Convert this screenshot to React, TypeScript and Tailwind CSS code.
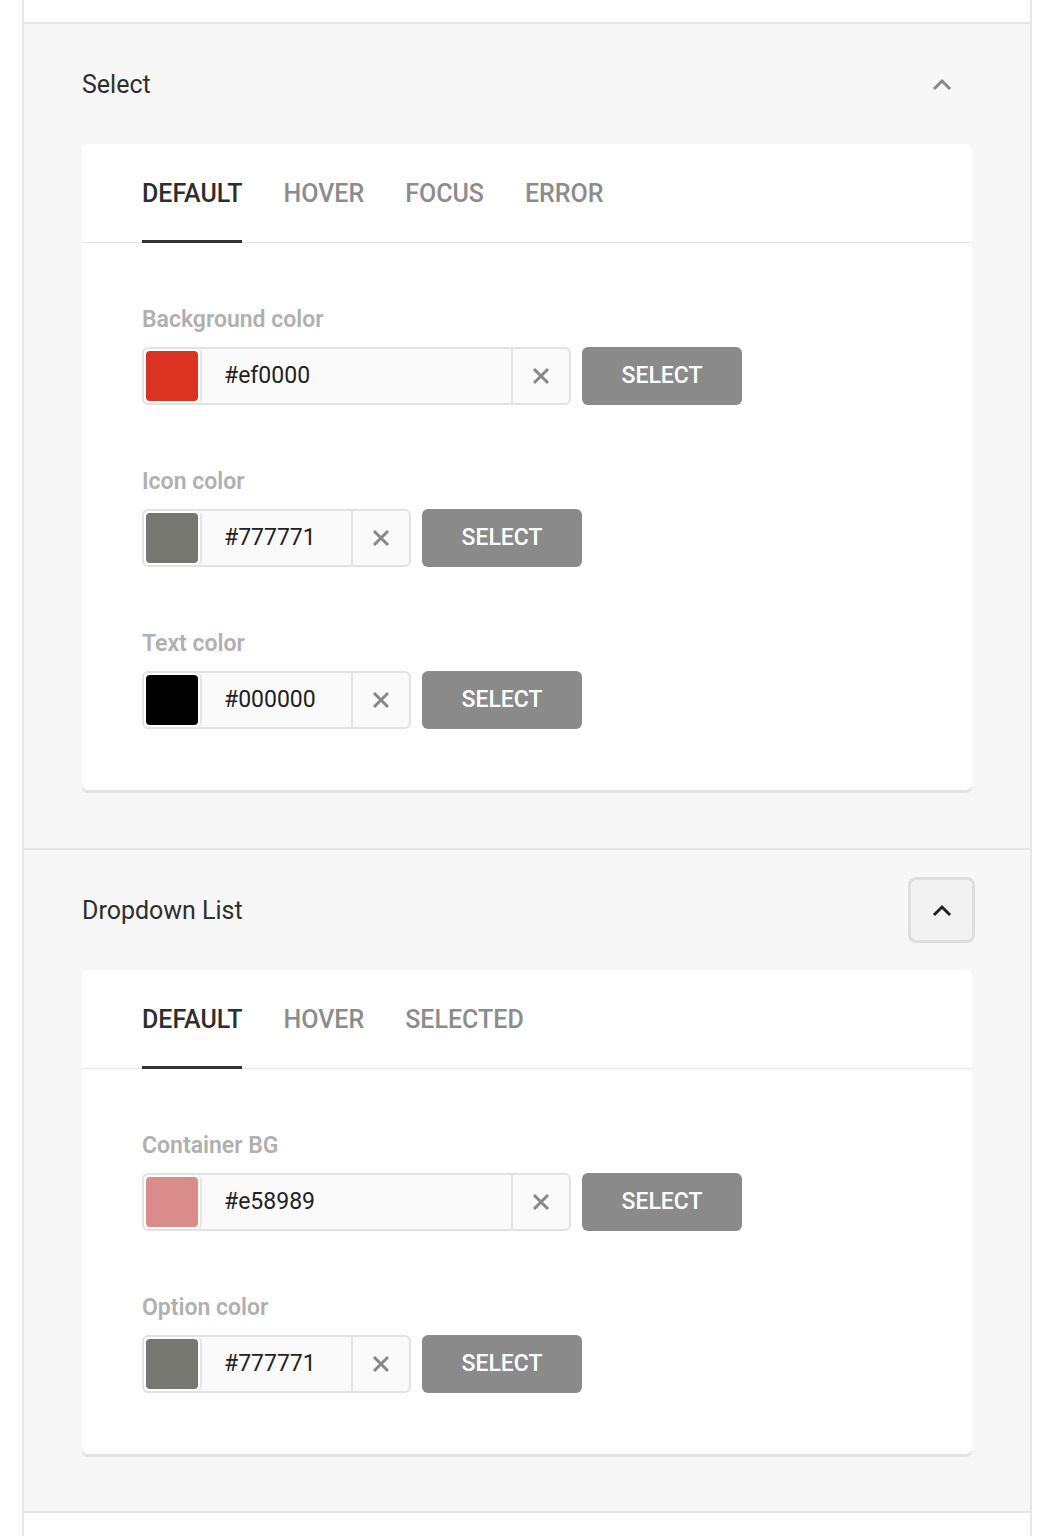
import React from "react";

type Field = { label: string; color: string; value: string; wide: boolean };

function Chevron({ dark }: { dark: boolean }) {
  return (
    <svg width="20" height="14" viewBox="0 0 20 14" fill="none">
      <path
        d="M3 11 L10 4 L17 11"
        stroke={dark ? "#222222" : "#888888"}
        strokeWidth="3"
        strokeLinecap="square"
        strokeLinejoin="miter"
      />
    </svg>
  );
}

function XIcon() {
  return (
    <svg width="20" height="20" viewBox="0 0 20 20" fill="none">
      <path d="M3 3 L17 17 M17 3 L3 17" stroke="#888888" strokeWidth="3" />
    </svg>
  );
}

function ColorRow({ f }: { f: Field }) {
  return (
    <div className="flex flex-col">
      <div className="text-[23px] leading-[26px] font-semibold text-[#b0b0b0]">{f.label}</div>
      <div className="mt-[14px] flex items-center gap-[11px] h-[58px]">
        <div
          className={`flex h-[58px] ${f.wide ? "w-[429px]" : "w-[269px]"} rounded-[6px] border-2 border-[#e2e2e2] bg-[#fafafa] overflow-hidden`}
        >
          <div className="w-[58px] h-full p-[2px] bg-white rounded-[5px] border-r-2 border-[#e6e6e6] shrink-0">
            <div className="w-full h-full rounded-[4px]" style={{ backgroundColor: f.color }} />
          </div>
          <div className="flex-1 flex items-center pl-[22px] text-[23px] text-[#222222]">{f.value}</div>
          <div className="w-[58px] h-full border-l-2 border-[#e6e6e6] flex items-center justify-center shrink-0">
            <XIcon />
          </div>
        </div>
        <button className="h-[58px] w-[160px] rounded-[6px] bg-[#8a8a8a] text-white text-[23px] font-medium flex items-center justify-center">
          SELECT
        </button>
      </div>
    </div>
  );
}

function Section({
  title,
  tabs,
  fields,
  active,
  pb,
}: {
  title: string;
  tabs: string[];
  fields: Field[];
  active: boolean;
  pb: string;
}) {
  return (
    <div className={`bg-[#f7f7f7] border-b-2 border-[#e6e6e6] pl-[58px] pr-[58px] pt-[27px] ${pb}`}>
      <div className="flex items-center justify-between h-[66px]">
        <div className="text-[25px] text-[#2e2e2e] pt-[1px]">{title}</div>
        <div
          className={`w-[67px] h-[66px] -mr-[3px] rounded-[8px] flex items-center justify-center border-[3px] ${
            active ? "border-[#dedede] bg-[#f2f2f2]" : "border-transparent"
          }`}
        >
          <Chevron dark={active} />
        </div>
      </div>
      <div className="mt-[27px] bg-white rounded-[6px] shadow-[0_3px_0_#e4e4e4]">
        <div className="flex gap-[41px] px-[60px] h-[99px] border-b border-[#e6e6e6]">
          {tabs.map((t, i) => (
            <div
              key={t}
              className={`h-[99px] pt-[4px] flex items-center border-b-[3px] text-[25px] font-medium ${
                i === 0 ? "border-[#333333] text-[#2e2e2e]" : "border-transparent text-[#8c8c8c]"
              }`}
            >
              {t}
            </div>
          ))}
        </div>
        <div className="px-[60px] pt-[64px] pb-[61px] flex flex-col gap-[64px]">
          {fields.map((f) => (
            <ColorRow key={f.label} f={f} />
          ))}
        </div>
      </div>
    </div>
  );
}

export default function App() {
  return (
    <div className="w-[1050px] h-[1536px] bg-white overflow-hidden" style={{ fontFamily: "Roboto, 'Noto Sans', sans-serif" }}>
      <div className="ml-[22px] w-[1010px] h-full border-x-2 border-[#e6e6e6] flex flex-col">
        <div className="h-[24px] bg-white border-b-2 border-[#e6e6e6] shrink-0" />
        <Section
          title="Select"
          tabs={["DEFAULT", "HOVER", "FOCUS", "ERROR"]}
          active={false}
          pb="pb-[58px]"
          fields={[
            { label: "Background color", color: "#db3322", value: "#ef0000", wide: true },
            { label: "Icon color", color: "#777771", value: "#777771", wide: false },
            { label: "Text color", color: "#000000", value: "#000000", wide: false },
          ]}
        />
        <Section
          title="Dropdown List"
          tabs={["DEFAULT", "HOVER", "SELECTED"]}
          active={true}
          pb="pb-[57px]"
          fields={[
            { label: "Container BG", color: "#d98c89", value: "#e58989", wide: true },
            { label: "Option color", color: "#777771", value: "#777771", wide: false },
          ]}
        />
        <div className="flex-1 bg-white" />
      </div>
    </div>
  );
}
